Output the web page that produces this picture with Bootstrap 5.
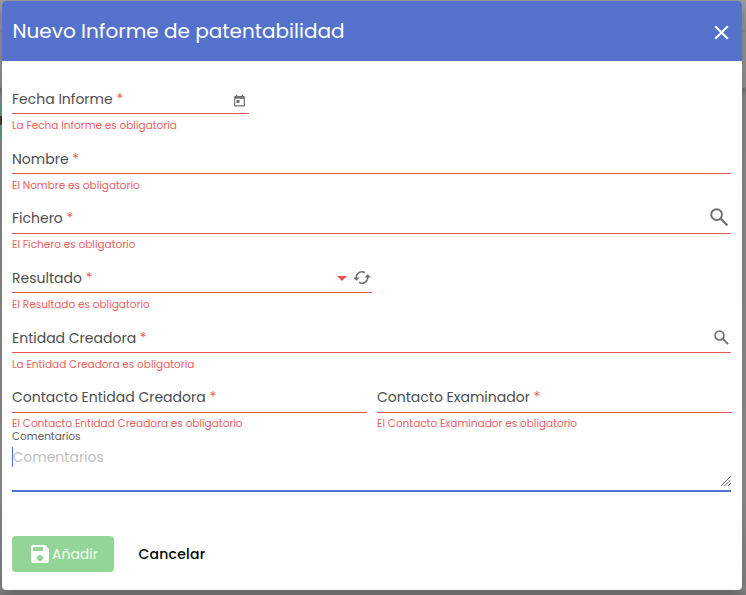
<!DOCTYPE html>
<html lang="es">
<head>
<meta charset="utf-8">
<meta name="viewport" content="width=device-width, initial-scale=1">
<title>Nuevo Informe de patentabilidad</title>
<link href="https://cdn.jsdelivr.net/npm/bootstrap@5.3.0/dist/css/bootstrap.min.css" rel="stylesheet">
<style>
body{font-family:Poppins,Inter,"Open Sans",sans-serif;background:#949594;height:595px;overflow:hidden;color:#4d4d4d}
.backdrop-page{position:absolute;inset:0;z-index:0;background:linear-gradient(#9c9c9c 0,#959595 30px,#858585 31px,#959595 32px,#929292 87px,#747474 89px,#8c8c8c 96px,#909090 500px,#858585 590px,#7b7b7b 595px)}
.page-cells{position:absolute;left:0;top:-13px;width:746px;height:18px;font-size:13px;line-height:18px;font-weight:500;color:#3d3d3d}
.page-cells span:nth-child(1){margin-left:96px;width:200px}
.page-cells span:nth-child(2){width:185px}
.green-edge{position:absolute;left:0;top:103px;width:2px;height:37px;background:linear-gradient(#6f9a83 0 13px,#4a3f2c 13px 22px,#6f9a83 22px)}
.dialog{position:relative;z-index:1;width:740px;height:589px;margin:1px 0 0 2px;border-radius:4px;overflow:hidden;box-shadow:0 6px 14px rgba(0,0,0,.25)}
.dialog-head{height:60px;background:#5472cc;padding:0 13px 0 10.5px}
.dialog-title{font-size:20px;font-weight:400;line-height:60px}
.dialog-head svg{margin-top:24px}
.form-area{padding:25.1px 11px 0 10px}
.field{height:59.65px}
.field-line{height:28.3px;border-bottom:1px solid #e95555;font-size:14px;line-height:26px;padding-right:3px}
.field-line b{font-weight:400;color:#f0605e}
.err{font-size:10.5px;line-height:16px;margin-top:3.6px;color:#f0605e;white-space:nowrap}
.w-date{width:237px}
.w-result{width:360px}
.field.contacts{height:45.8px;column-gap:10px;width:720px}
.contacts>div{width:355px}
.note-label{font-size:10.5px;line-height:14px;color:#5c5c5c}
.note-box{height:47.6px;border-bottom:2px solid #5472cc;font-size:14px;color:#c2c2c2;padding-top:2.6px}
.note-box .caret{width:1px;height:20px;background:#5472cc}
.note-box .hint{line-height:20px;margin-left:-.5px}
.actions{margin-top:44px;gap:24.5px}
.btn-add{width:102px;height:36px;border-radius:4px;background:#93d596;color:#f4fbf4;font-size:14px;padding:1px 0 0 16px}
.btn-cancel{font-size:14px;font-weight:500;letter-spacing:.22px;color:#000;padding:1px 0 0}
.ico-find{margin-top:2.3px}
.ico-find-sm{margin-top:5.3px;margin-right:-1px}
.ico-arrow{margin-top:8.3px;margin-right:5px}
.ico-sync{margin-top:5px;margin-right:1px}
svg{display:block;flex:none}
</style>
<script src="https://cdn.jsdelivr.net/npm/bootstrap@5.3.0/dist/js/bootstrap.bundle.min.js"></script>
</head>
<body>
<div class="backdrop-page" aria-hidden="true">
  <div class="page-cells d-flex"><span>Nombre</span><span>Fichero</span><span>Entidad Creadora</span></div>
  <div class="green-edge"></div>
</div>
<div class="dialog bg-white" role="dialog">
  <div class="dialog-head d-flex justify-content-between text-white">
    <h1 class="dialog-title mb-0">Nuevo Informe de patentabilidad</h1>
    <svg width="15" height="15" viewBox="0 0 15 15"><path d="M1.200 1.200 13.800 13.800M13.800 1.200 1.200 13.800" stroke="#fff" stroke-width="2"/></svg>
  </div>
  <div class="form-area">
    <div class="field w-date">
      <div class="field-line d-flex justify-content-between"><span>Fecha Informe <b>*</b></span>
        <svg class="mt-2" width="13" height="14" viewBox="0 0 13 14"><path fill="#707070" fill-rule="evenodd" d="M3 .7h1.300V2h4.400V.7H10V2h.7q1.200 0 1.200 1.200v8.100q0 1.200-1.200 1.200H2.300q-1.200 0-1.200-1.200V3.200Q1.100 2 2.300 2H3zM2.300 4.800v6.500h8.400V4.800zM3.500 6h3v3h-3z"/></svg></div>
      <div class="err">La Fecha Informe es obligatoria</div>
    </div>
    <div class="field">
      <div class="field-line">Nombre <b>*</b></div>
      <div class="err">El Nombre es obligatorio</div>
    </div>
    <div class="field">
      <div class="field-line d-flex justify-content-between"><span>Fichero <b>*</b></span>
        <svg class="ico-find" width="18" height="18" viewBox="0 0 18 18"><circle cx="6.600" cy="6.600" r="5.400" fill="none" stroke="#707070" stroke-width="1.900"/><path d="m10.400 10.400 7 7" stroke="#707070" stroke-width="2.200"/></svg></div>
      <div class="err">El Fichero es obligatorio</div>
    </div>
    <div class="field w-result">
      <div class="field-line d-flex pe-0"><span class="me-auto">Resultado <b>*</b></span>
        <svg class="ico-arrow" width="12" height="12" viewBox="0 0 12 12"><path d="M1 3h10L6 8z" fill="#e95555"/></svg>
        <svg class="ico-sync" width="18" height="15" viewBox="1 3 22 18"><path fill="#6c6f73" d="m19 8-4 4h3c0 3.310-2.690 6-6 6-1.010 0-1.970-.25-2.800-.7l-1.460 1.460C8.970 19.540 10.430 20 12 20c4.420 0 8-3.580 8-8h3zM6 12c0-3.310 2.690-6 6-6 1.010 0 1.970.25 2.800.7l1.460-1.460C15.030 4.460 13.570 4 12 4c-4.420 0-8 3.580-8 8H1l4 4 4-4z"/></svg></div>
      <div class="err">El Resultado es obligatorio</div>
    </div>
    <div class="field">
      <div class="field-line d-flex justify-content-between"><span>Entidad Creadora <b>*</b></span>
        <svg class="ico-find-sm" width="15" height="15" viewBox="0 0 18 18"><circle cx="6.600" cy="6.600" r="5.400" fill="none" stroke="#707070" stroke-width="1.900"/><path d="m10.400 10.400 6.500 6.500" stroke="#707070" stroke-width="2.400"/></svg></div>
      <div class="err">La Entidad Creadora es obligatoria</div>
    </div>
    <div class="field contacts d-flex">
      <div><div class="field-line">Contacto Entidad Creadora <b>*</b></div>
        <div class="err">El Contacto Entidad Creadora es obligatorio</div></div>
      <div><div class="field-line">Contacto Examinador <b>*</b></div>
        <div class="err">El Contacto Examinador es obligatorio</div></div>
    </div>
    <div class="note-label">Comentarios</div>
    <div class="note-box d-flex">
      <span class="caret"></span><span class="hint me-auto">Comentarios</span>
      <svg class="align-self-end" width="10" height="14" viewBox="0 0 10 14"><path d="M0 10l10-10M3.500 10l6.500-6.500M7 10l3-3" stroke="#666" stroke-width="1"/></svg>
    </div>
    <div class="actions d-flex align-items-center">
      <button class="btn btn-add border-0 d-flex align-items-center" type="button">
        <svg width="24" height="24" viewBox="0 0 24 24"><path fill="#fff" fill-rule="evenodd" d="M17 3H5a2 2 0 0 0-2 2v14a2 2 0 0 0 2 2h14a2 2 0 0 0 2-2V7zM12 19a3 3 0 1 1 0-6 3 3 0 0 1 0 6M15 9H5V5h10z"/></svg><span>Añadir</span></button>
      <button class="btn btn-cancel border-0" type="button">Cancelar</button>
    </div>
  </div>
</div>
</body>
</html>
